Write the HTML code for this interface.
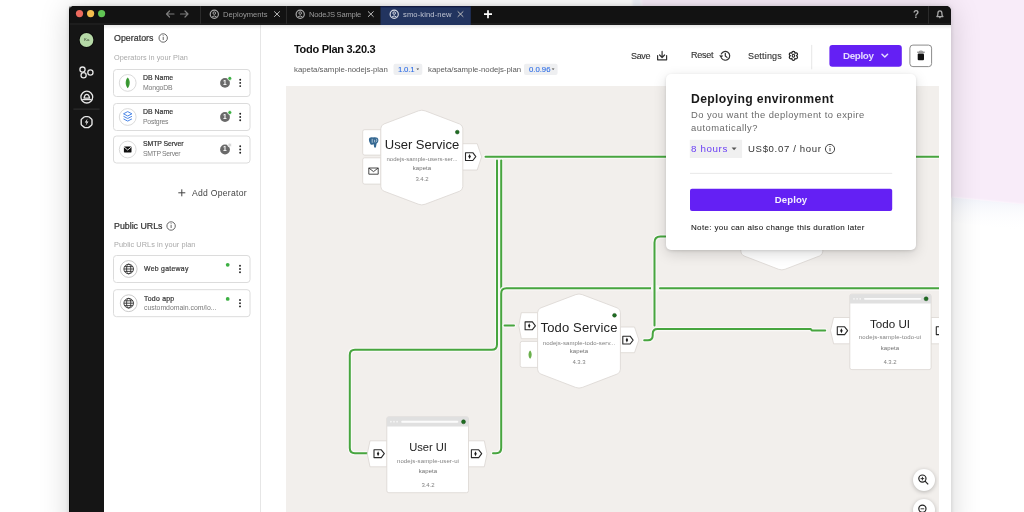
<!DOCTYPE html>
<html><head><meta charset="utf-8">
<style>
*{box-sizing:border-box;margin:0;padding:0}
html,body{width:1024px;height:512px;overflow:hidden;background:#fff;font-family:"Liberation Sans",sans-serif}
svg{position:absolute;left:0;top:0}
#win{position:absolute;left:69px;top:6px;width:882px;height:530px;border-radius:5px 5px 0 0;background:#151515;box-shadow:0 0 4px rgba(0,0,0,.14),0 2px 30px rgba(0,0,0,.17);z-index:1}
#main{z-index:2}
#popup{position:absolute;left:666.2px;top:74.4px;width:249.6px;height:175.5px;background:#fff;border-radius:5px;box-shadow:0 1px 3px rgba(0,0,0,.12),0 4px 14px rgba(0,0,0,.14);z-index:5}
#psvg{z-index:6}
.zb{position:absolute;width:22px;height:22px;border-radius:50%;background:#fff;box-shadow:0 1px 4px rgba(0,0,0,.25);z-index:7}
.t{position:absolute;white-space:nowrap;line-height:1;z-index:10;will-change:transform}
</style></head><body>
<svg width="1024" height="512" style="z-index:0">
 <defs><filter id="bl" x="-20%" y="-20%" width="140%" height="140%"><feGaussianBlur stdDeviation="1.2"/></filter></defs>
 <polygon points="632,-10 641,-10 646,160 640,160" fill="#f1f3fa" filter="url(#bl)"/>
 <polygon points="641,-10 1034,-10 1034,205.5 952,197.5 648,160" fill="#f8ecf9" filter="url(#bl)"/>
 <linearGradient id="band" x1="0" y1="0" x2="0" y2="1"><stop offset="0" stop-color="#f1f3fa"/><stop offset="1" stop-color="#fff" stop-opacity="0"/></linearGradient>
 <polygon points="952,197.5 1034,205.5 1034,232 952,222" fill="url(#band)"/>
</svg>
<div id="win"></div>
<div style="position:absolute;left:68.5px;top:5.5px;width:2px;height:520px;border-radius:5.5px 0 0 0;border-left:1px solid rgba(0,0,0,.6);z-index:9"></div>
<svg id="main" width="1024" height="512">
 <defs>
  <clipPath id="cv"><rect x="286" y="86" width="653" height="426"/></clipPath>
  <g id="tag"><path d="M-5,-3.9 H2.3 L5.3,0 L2.3,3.9 H-5 Z" fill="none" stroke="#2a2a2a" stroke-width="1.1" stroke-linejoin="round"/><path d="M-0.9,-2.5 L0.3,0 L-0.9,2.5 L-2.1,0 Z" fill="#1a1a1a"/></g>
 </defs>
 <!-- title bar -->
 <rect x="69" y="6" width="882" height="18" rx="5" fill="#121212"/>
 <rect x="69" y="23" width="882" height="2" fill="#1d1d1d"/>
 <circle cx="79.5" cy="13.6" r="3.6" fill="#ed6a5e"/>
 <circle cx="90.6" cy="13.6" r="3.6" fill="#f5bf4f"/>
 <circle cx="101.6" cy="13.6" r="3.6" fill="#61c554"/>
 <g stroke="#7c7c7c" stroke-width="1.2" fill="none" stroke-linecap="round" stroke-linejoin="round">
  <path d="M166.5,14 H174 M166.5,14 L169.5,11 M166.5,14 L169.5,17"/>
  <path d="M180.5,14 H188 M188,14 L185,11 M188,14 L185,17"/>
 </g>
 <rect x="200" y="6" width="1" height="18" fill="#2a2a2a"/>
 <rect x="286" y="6" width="1" height="18" fill="#2a2a2a"/>
 <rect x="380.5" y="6.5" width="90.3" height="18.5" fill="#22345f"/><rect x="380.5" y="6.5" width="90.3" height=".8" fill="#0c1445"/>
  <g stroke="#a8a8a8" fill="none"><circle cx="214.3" cy="14.2" r="4.1" stroke-width="1.2"/><circle cx="214.3" cy="13.1" r="1.3" stroke-width="1"/><path d="M211.8,17.1 Q214.3,14.7 216.8,17.1" stroke-width="1"/></g>
  <g stroke="#a8a8a8" fill="none"><circle cx="300.2" cy="14.2" r="4.1" stroke-width="1.2"/><circle cx="300.2" cy="13.1" r="1.3" stroke-width="1"/><path d="M297.7,17.1 Q300.2,14.7 302.7,17.1" stroke-width="1"/></g>
  <g stroke="#d5d9e3" fill="none"><circle cx="394.2" cy="14.2" r="4.1" stroke-width="1.2"/><circle cx="394.2" cy="13.1" r="1.3" stroke-width="1"/><path d="M391.7,17.1 Q394.2,14.7 396.7,17.1" stroke-width="1"/></g>
 <g stroke="#bdbdbd" stroke-width="1" shape-rendering="geometricPrecision">
  <path d="M274.2,11.4 L279.8,16.8"/><path d="M279.8,11.4 L274.2,16.8"/>
  <path d="M368,11.4 L373.6,16.8"/><path d="M373.6,11.4 L368,16.8"/>
  <path d="M457.7,11.4 L463.3,16.8"/><path d="M463.3,11.4 L457.7,16.8"/>
 </g>
 <path d="M484,14.2 H492 M488,10.2 V18.2" stroke="#fff" stroke-width="1.7"/>
 <rect x="928" y="6" width="1" height="18" fill="#2a2a2a"/>
 <path d="M936.9,16.6 C938,15.6 937.9,14.6 937.9,13.4 C937.9,11.8 938.8,10.9 939.9,10.9 C941,10.9 941.9,11.8 941.9,13.4 C941.9,14.6 941.8,15.6 942.9,16.6 Z" fill="none" stroke="#a8a8a8" stroke-width="1.3" stroke-linejoin="round"/>
 <circle cx="939.9" cy="17.6" r=".8" fill="#a8a8a8"/>
 <!-- sidebar -->
 <rect x="69" y="25" width="35" height="487" fill="#151515"/>
 <circle cx="86.5" cy="40" r="7.8" fill="#0a0a0a"/><circle cx="86.5" cy="40" r="6.9" fill="#b6d9a7"/>
 <g fill="none" stroke="#e6e6e6" stroke-width="1.3">
  <circle cx="82.5" cy="69.6" r="2.6"/><circle cx="83.6" cy="75.2" r="2.6"/><circle cx="90.4" cy="72.5" r="2.6"/>
  <circle cx="86.8" cy="97.1" r="5.9"/>
  <path d="M84,98.1 C84.4,95.9 85.5,94.4 86.8,94.4 C88.1,94.4 89.2,95.9 89.6,98.1 Z" stroke-linejoin="round"/>
  <path d="M82.2,99.6 H91.4"/>
  <path d="M85.30,116.60 L87.90,116.60 Q88.60,116.60 89.14,117.04 L91.46,118.96 Q92.00,119.40 92.00,120.10 L92.00,124.10 Q92.00,124.80 91.46,125.24 L89.14,127.16 Q88.60,127.60 87.90,127.60 L85.30,127.60 Q84.60,127.60 84.06,127.16 L81.74,125.24 Q81.20,124.80 81.20,124.10 L81.20,120.10 Q81.20,119.40 81.74,118.96 L84.06,117.04 Q84.60,116.60 85.30,116.60 Z" stroke-width="1.4"/>
 </g>
 <path d="M87.6,118.6 L84.8,122.6 H86.6 L85.6,125.8 L88.5,121.6 H86.6 Z" fill="#f0f0f0"/>
 <rect x="73.4" y="108.6" width="26.2" height="1" fill="#333"/>
 <!-- panel -->
 <rect x="104" y="25" width="156" height="487" fill="#fff"/>
 <rect x="260" y="25" width="1" height="487" fill="#e6e6e6"/>
 <rect x="261" y="25" width="690" height="487" fill="#fff"/>
 <g fill="none" stroke="#555" stroke-width=".9">
  <circle cx="163.2" cy="38" r="4.2"/><circle cx="171.1" cy="226" r="4.2"/>
 </g>
 <g fill="#555"><rect x="162.75" y="37" width=".9" height="3"/><circle cx="163.2" cy="35.7" r=".55"/><rect x="170.65" y="225" width=".9" height="3"/><circle cx="171.1" cy="223.7" r=".55"/></g>
 <g fill="#fff" stroke="#dcdcdc" stroke-width="1">
  <rect x="113.5" y="69.5" width="136.5" height="27" rx="3"/>
  <rect x="113.5" y="103.5" width="136.5" height="27" rx="3"/>
  <rect x="113.5" y="136" width="136.5" height="27" rx="3"/>
  <rect x="113.5" y="255.5" width="136.5" height="27" rx="3"/>
  <rect x="113.5" y="289.7" width="136.5" height="27" rx="3"/>
 </g>
 <g fill="#fff" stroke="#d6d6d6" stroke-width=".9">
  <circle cx="127.7" cy="82.9" r="8.4"/><circle cx="127.7" cy="117" r="8.4"/><circle cx="127.7" cy="149.5" r="8.4"/>
  <circle cx="128.7" cy="269" r="8.4" stroke="#c4c4c4"/><circle cx="128.7" cy="303.2" r="8.4" stroke="#c4c4c4"/>
 </g>
 <path d="M127.7,77.6 C125,80 125,85.6 127.7,88.2 C130.4,85.6 130.4,80 127.7,77.6 Z" fill="#3fa037"/><path d="M127.7,79 V87.6" stroke="#2f7d2a" stroke-width=".5"/>
 <g fill="none" stroke="#4a86e8" stroke-width="1" stroke-linejoin="round">
  <path d="M127.7,111.6 L131.9,113.8 L127.7,116 L123.5,113.8 Z"/>
  <path d="M123.5,116.3 L127.7,118.5 L131.9,116.3"/>
  <path d="M123.5,118.9 L127.7,121.1 L131.9,118.9"/>
 </g>
 <rect x="123.9" y="146.6" width="7.6" height="5.8" rx=".4" fill="#111"/>
 <path d="M124,146.9 L127.7,150 L131.4,146.9" stroke="#fff" stroke-width=".9" fill="none"/>
 <g fill="none" stroke="#333" stroke-width=".9">
  <circle cx="128.7" cy="269" r="4.8"/><ellipse cx="128.7" cy="269" rx="2.1" ry="4.8"/><path d="M123.9,269 H133.5 M124.6,266.6 H132.8 M124.6,271.4 H132.8"/>
  <circle cx="128.7" cy="303.2" r="4.8"/><ellipse cx="128.7" cy="303.2" rx="2.1" ry="4.8"/><path d="M123.9,303.2 H133.5 M124.6,300.8 H132.8 M124.6,305.6 H132.8"/>
 </g>
 <g fill="#6a6a6a"><circle cx="225" cy="82.9" r="4.9"/><circle cx="225" cy="117" r="4.9"/><circle cx="225" cy="149.5" r="4.9"/></g>
 <g stroke="#fff" stroke-width=".8">
  <circle cx="229.8" cy="78.4" r="2" fill="#3cb043"/><circle cx="229.8" cy="112.5" r="2" fill="#3cb043"/><circle cx="229.8" cy="145" r="2" fill="#d8d8d8"/>
 </g>
 <circle cx="227.7" cy="264.8" r="1.9" fill="#3cb043"/><circle cx="227.7" cy="298.9" r="1.9" fill="#3cb043"/>
 <g fill="#222">
  <circle cx="240.2" cy="79.7" r=".95"/><circle cx="240.2" cy="82.9" r=".95"/><circle cx="240.2" cy="86.1" r=".95"/>
  <circle cx="240.2" cy="113.8" r=".95"/><circle cx="240.2" cy="117" r=".95"/><circle cx="240.2" cy="120.2" r=".95"/>
  <circle cx="240.2" cy="146.3" r=".95"/><circle cx="240.2" cy="149.5" r=".95"/><circle cx="240.2" cy="152.7" r=".95"/>
  <circle cx="240" cy="265.8" r=".95"/><circle cx="240" cy="269" r=".95"/><circle cx="240" cy="272.2" r=".95"/>
  <circle cx="240" cy="300" r=".95"/><circle cx="240" cy="303.2" r=".95"/><circle cx="240" cy="306.4" r=".95"/>
 </g>
 <path d="M178.3,192.8 H185.3 M181.8,189.3 V196.3" stroke="#444" stroke-width="1"/>
 <defs><linearGradient id="tsh" x1="0" y1="0" x2="0" y2="1"><stop offset="0" stop-color="#000" stop-opacity=".09"/><stop offset="1" stop-color="#000" stop-opacity="0"/></linearGradient></defs>
 <rect x="104" y="25" width="847" height="4" fill="url(#tsh)"/>
 <!-- header -->
 <rect x="393.5" y="63.7" width="28.8" height="11.2" rx="2" fill="#eeeff1"/>
 <rect x="524" y="63.7" width="33.6" height="11.2" rx="2" fill="#eeeff1"/>
 <path d="M416.4,68.5 H419.2 L417.8,70.1 Z M551.7,68.5 H554.5 L553.1,70.1 Z" fill="#444"/>
 <g fill="none" stroke="#333" stroke-width="1.2" stroke-linejoin="round" stroke-linecap="round">
  <path d="M657.6,55.5 V59.8 H666.6 V55.5"/><path d="M662.1,51.4 V57.4 M659.6,55 L662.1,57.5 L664.6,55"/>
  <path d="M721.3,54 A4.4,4.4 0 1 1 721.6,58.2"/><path d="M725.3,53.3 V56 L727,57.4"/></g><path d="M719.2,55.2 L723.2,55.4 L721.1,58.2 Z" fill="#333"/><g>
 </g>
 <path d="M791.90,53.20 C791.70,50.67 795.10,50.67 794.90,53.20 C796.99,51.77 798.69,54.71 796.40,55.80 C798.69,56.89 796.99,59.83 794.90,58.40 C795.10,60.93 791.70,60.93 791.90,58.40 C789.81,59.83 788.11,56.89 790.40,55.80 C788.11,54.71 789.81,51.77 791.90,53.20 Z" fill="none" stroke="#222" stroke-width="1.2" stroke-linejoin="round"/>
 <ellipse cx="793.4" cy="55.8" rx="1.2" ry="1.5" fill="none" stroke="#222" stroke-width="1.1"/>
 <rect x="811.2" y="44.9" width="1" height="24.4" fill="#e6e6e6"/>
 <rect x="829.4" y="44.9" width="72.4" height="21.9" rx="3" fill="#6420f4"/>
 <path d="M882,54.3 L884.8,57 L887.6,54.3" stroke="#e6deff" stroke-width="1.5" fill="none" stroke-linecap="round" stroke-linejoin="round"/>
 <rect x="909.9" y="45.1" width="21.7" height="21.5" rx="3" fill="#fff" stroke="#8c8c8c" stroke-width="1"/>
 <path d="M917.2,52.2 H924.7" stroke="#777" stroke-width="1.1"/>
 <path d="M919.6,51.8 V51.1 H922.3 V51.8" stroke="#777" stroke-width=".8" fill="none"/>
 <rect x="917.7" y="53.4" width="6.3" height="6.9" rx="1" fill="#111"/>
 <!-- canvas -->
 <rect x="286" y="86" width="653" height="426" fill="#f2efec"/>
 <g clip-path="url(#cv)">
  <g fill="none" stroke-linecap="round">
   <path d="M485.5,156.7 H939" stroke="#f9f8f6" stroke-width="4.4"/><path d="M485.5,156.7 H939" stroke="#47a53f" stroke-width="2"/>
   <path d="M497,160.5 V344.5 Q497,349.8 491.7,349.8 H355 Q349.8,349.8 349.8,355 V448 Q349.8,453.2 355,453.2 H367.5" stroke="#f9f8f6" stroke-width="4.4"/><path d="M497,160.5 V344.5 Q497,349.8 491.7,349.8 H355 Q349.8,349.8 349.8,355 V448 Q349.8,453.2 355,453.2 H367.5" stroke="#47a53f" stroke-width="2"/>
   <path d="M501.2,160.5 V290" stroke="#f9f8f6" stroke-width="4.4"/><path d="M501.2,160.5 V290" stroke="#47a53f" stroke-width="2"/>
   <path d="M939,288.2 H506.4 Q501.2,288.2 501.2,293.4 V448 Q501.2,453.2 496,453.2 H493" stroke="#f9f8f6" stroke-width="4.4"/><path d="M939,288.2 H506.4 Q501.2,288.2 501.2,293.4 V448 Q501.2,453.2 496,453.2 H493" stroke="#47a53f" stroke-width="2"/>
   <path d="M939,288.2 H660" stroke="#f9f8f6" stroke-width="4.4"/><path d="M939,288.2 H660" stroke="#47a53f" stroke-width="2"/>
   <rect x="651" y="285" width="7" height="6.5" fill="#f8f7f5"/>
   <path d="M665.5,236.5 H660.5 Q654.5,236.5 654.5,242.5 V325.6" stroke="#f9f8f6" stroke-width="4.4"/><path d="M665.5,236.5 H660.5 Q654.5,236.5 654.5,242.5 V325.6" stroke="#47a53f" stroke-width="2"/>
   <path d="M644.2,340.3 H647.9 Q652.7,340.3 652.7,335.5 V333.9 Q652.7,329.1 657.5,329.1 H810.6 L812,330.5 H825.2" stroke="#f9f8f6" stroke-width="4.4"/><path d="M644.2,340.3 H647.9 Q652.7,340.3 652.7,335.5 V333.9 Q652.7,329.1 657.5,329.1 H810.6 L812,330.5 H825.2" stroke="#47a53f" stroke-width="2"/>
   <path d="M504.6,325.6 H514" stroke="#f9f8f6" stroke-width="4.4"/><path d="M504.6,325.6 H514" stroke="#47a53f" stroke-width="2"/>
  </g>
  <!-- User Service node -->
  <g stroke="#dad6d2" stroke-width=".8" fill="#fff" stroke-linejoin="round">
   <path d="M381,129.7 H364.7 Q362.7,129.7 362.7,131.7 V153.1 Q362.7,155.1 364.7,155.1 H381 Z"/>
   <path d="M381,157.8 H364.7 Q362.7,157.8 362.7,159.8 V182.1 Q362.7,184.1 364.7,184.1 H381 Z"/>
   <path d="M462,143.7 H477.2 L481.6,156.9 L477.2,170 H462 Z"/>
   <path d="M425.07,110.84 L459.53,123.96 Q462.80,125.20 462.80,128.70 L462.80,186.50 Q462.80,190.00 459.53,191.24 L425.07,204.26 Q421.80,205.50 418.53,204.26 L384.07,191.24 Q380.80,190.00 380.80,186.50 L380.80,128.70 Q380.80,125.20 384.07,123.96 L418.53,110.84 Q421.80,109.60 425.07,110.84 Z"/>
   <!-- Todo Service -->
   <path d="M538,312.7 H521.3 L518.8,325.7 L521.3,338.7 H538 Z"/>
   <path d="M538,341.4 H522.2 Q520.2,341.4 520.2,343.4 V365.4 Q520.2,367.4 522.2,367.4 H538 Z"/>
   <path d="M620,327 H634.5 L638.9,340 L634.5,352.7 H620 Z"/>
   <path d="M582.27,294.64 L617.13,307.86 Q620.40,309.10 620.40,312.60 L620.40,369.30 Q620.40,372.80 617.13,374.05 L582.27,387.45 Q579.00,388.70 575.73,387.45 L540.87,374.05 Q537.60,372.80 537.60,369.30 L537.60,312.60 Q537.60,309.10 540.87,307.86 L575.73,294.64 Q579.00,293.40 582.27,294.64 Z"/>
   <!-- hidden hexagon under popup -->
   <path d="M785.07,176.54 L819.53,189.56 Q822.80,190.80 822.80,194.30 L822.80,251.20 Q822.80,254.70 819.53,255.96 L785.07,269.24 Q781.80,270.50 778.53,269.24 L744.07,255.96 Q740.80,254.70 740.80,251.20 L740.80,194.30 Q740.80,190.80 744.07,189.56 L778.53,176.54 Q781.80,175.30 785.07,176.54 Z"/>
   <!-- User UI -->
   <path d="M387,440.8 H370 L367.3,453.8 L370,466.8 H387 Z"/>
   <path d="M468,440.8 H484.3 L487,453.8 L484.3,466.8 H468 Z"/>
   <rect x="386.8" y="416.8" width="81.7" height="75.9" rx="2"/>
   <!-- Todo UI -->
   <path d="M850,317.5 H833.6 L830.5,330.6 L833.6,343.8 H850 Z"/>
   <path d="M931,317.5 H948 V343.8 H931 Z"/>
   <rect x="849.8" y="294.2" width="81.3" height="75.4" rx="2"/>
  </g>
  <!-- browser bars -->
  <path d="M386.8,426.6 V418.8 Q386.8,416.8 388.8,416.8 H466.5 Q468.5,416.8 468.5,418.8 V426.6 Z" fill="#e0e0e0"/>
  <path d="M849.8,303.6 V296.2 Q849.8,294.2 851.8,294.2 H929.1 Q931.1,294.2 931.1,296.2 V303.6 Z" fill="#e0e0e0"/>
  <g fill="#f6f6f6"><circle cx="390.9" cy="421.7" r=".85"/><circle cx="394" cy="421.7" r=".85"/><circle cx="397.1" cy="421.7" r=".85"/>
   <circle cx="854" cy="298.8" r=".85"/><circle cx="857.1" cy="298.8" r=".85"/><circle cx="860.2" cy="298.8" r=".85"/></g>
  <rect x="401.2" y="420.8" width="57.1" height="1.9" rx=".95" fill="#fbfbfb"/>
  <rect x="864" y="297.9" width="57.2" height="1.9" rx=".95" fill="#fbfbfb"/>
  <g fill="#1f6e22" stroke="#174f18" stroke-width=".5"><circle cx="463.5" cy="421.8" r="2"/><circle cx="926.1" cy="298.8" r="2"/><circle cx="457.3" cy="132.1" r="1.9"/><circle cx="614.5" cy="315.3" r="1.9"/></g>
  <!-- tab icons -->
  <use href="#tag" x="470.5" y="156.6"/>
  <use href="#tag" x="530.1" y="325.8"/>
  <use href="#tag" x="627.8" y="340.1"/>
  <use href="#tag" x="379" y="453.7"/>
  <use href="#tag" x="476.4" y="453.7"/>
  <use href="#tag" x="842.3" y="330.7"/>
  <use href="#tag" x="941.3" y="330.7"/>
  <!-- postgres elephant -->
  <path d="M368.9,139.6 C368.9,137.6 370.9,136.9 373,137.5 C375.2,136.9 378.4,137.2 378.4,140 C378.4,141.9 377.6,143.1 376.6,143.6 L376,147 C375.7,147.9 374.4,147.9 374.1,147 L373.7,144.3 L372.1,144.7 C371.1,145.1 370.5,144.6 370.1,143.6 C369.3,142.3 368.9,140.9 368.9,139.6 Z" fill="#336791"/>
  <path d="M372.2,138.8 V142.8 M373.9,139.8 C375.1,139.8 375.2,142.2 373.9,142.3 M376.3,138.8 C377.1,140 376.9,141.6 375.8,142.3" stroke="#fff" stroke-width=".6" fill="none"/>
  <path d="M368.8,168 H378.2 V174.2 H368.8 Z M368.8,168 L373.5,171.6 L378.2,168" fill="none" stroke="#333" stroke-width=".9" stroke-linejoin="round"/>
  <path d="M530.1,350.4 C528,352.2 528,356.8 530.1,358.8 C532.2,356.8 532.2,352.2 530.1,350.4 Z" fill="#6ab04c"/>
 </g>
</svg>
<div id="popup"></div>
<svg id="psvg" width="1024" height="512">
 <rect x="689.8" y="139.8" width="52.3" height="18.2" fill="#f0f0f0"/>
 <path d="M731.6,147.6 H736.6 L734.1,150.2 Z" fill="#555"/>
 <g fill="none" stroke="#333" stroke-width=".9"><circle cx="830" cy="149" r="4.6"/></g>
 <rect x="829.55" y="148" width=".9" height="3.3" fill="#333"/><circle cx="830" cy="146.5" r=".6" fill="#333"/>
 <rect x="690" y="172.9" width="202.2" height=".8" fill="#e3e3e3"/>
 <rect x="690" y="188.8" width="202.2" height="22.2" rx="2" fill="#6420f4"/>
</svg>
<div class="zb" style="left:912.9px;top:469.1px"></div>
<div class="zb" style="left:912.9px;top:499.3px"></div>
<svg width="1024" height="512" style="z-index:8">
 <g fill="none" stroke="#222" stroke-width="1.2"><circle cx="922.4" cy="478.6" r="3.6"/><path d="M925,481.2 L928.2,484.4"/><path d="M920.6,478.6 H924.2 M922.4,476.8 V480.4" stroke-width=".9"/>
 <circle cx="922.4" cy="508.8" r="3.6"/><path d="M920.6,508.8 H924.2" stroke-width=".9"/></g>
</svg>
<div class="t" id="t0" style="left:223px;top:10.81px;font-size:7.6px;font-weight:400;color:#9a9a9a;letter-spacing:0.017px;">Deployments</div>
<div class="t" id="t1" style="left:308.7px;top:10.81px;font-size:7.6px;font-weight:400;color:#9a9a9a;letter-spacing:-0.215px;">NodeJS Sample</div>
<div class="t" id="t2" style="left:402.5px;top:10.81px;font-size:7.6px;font-weight:400;color:#bfc4d2;letter-spacing:0.112px;">smo-kind-new</div>
<div class="t" id="t3" style="left:113.8px;top:33.73px;font-size:8.8px;font-weight:400;color:#333;letter-spacing:0.047px;-webkit-text-stroke:.22px #333;">Operators</div>
<div class="t" id="t4" style="left:113.8px;top:53.66px;font-size:7.3px;font-weight:400;color:#a9a9a9;letter-spacing:0.037px;">Operators in your Plan</div>
<div class="t" id="t5" style="left:143.1px;top:74.55px;font-size:6.9px;font-weight:400;color:#333;letter-spacing:0.038px;-webkit-text-stroke:.2px #333;">DB Name</div>
<div class="t" id="t6" style="left:143.1px;top:84.95px;font-size:6.9px;font-weight:400;color:#7a7a7a;letter-spacing:-0.159px;">MongoDB</div>
<div class="t" id="t7" style="left:143.1px;top:108.55px;font-size:6.9px;font-weight:400;color:#333;letter-spacing:0.038px;-webkit-text-stroke:.2px #333;">DB Name</div>
<div class="t" id="t8" style="left:143.1px;top:118.95px;font-size:6.9px;font-weight:400;color:#7a7a7a;letter-spacing:-0.243px;">Postgres</div>
<div class="t" id="t9" style="left:143.1px;top:140.85px;font-size:6.9px;font-weight:400;color:#333;letter-spacing:-0.073px;-webkit-text-stroke:.2px #333;">SMTP Server</div>
<div class="t" id="t10" style="left:143.1px;top:151.25px;font-size:6.9px;font-weight:400;color:#7a7a7a;letter-spacing:-0.373px;">SMTP Server</div>
<div class="t" id="t11" style="left:192px;top:188.63px;font-size:8.6px;font-weight:400;color:#444;letter-spacing:0.273px;">Add Operator</div>
<div class="t" id="t12" style="left:113.5px;top:221.63px;font-size:8.8px;font-weight:400;color:#333;letter-spacing:0.009px;-webkit-text-stroke:.22px #333;">Public URLs</div>
<div class="t" id="t13" style="left:113.5px;top:241.36px;font-size:7.3px;font-weight:400;color:#a9a9a9;letter-spacing:0.065px;">Public URLs in your plan</div>
<div class="t" id="t14" style="left:144px;top:266.05px;font-size:6.9px;font-weight:400;color:#333;letter-spacing:0.277px;-webkit-text-stroke:.2px #333;">Web gateway</div>
<div class="t" id="t15" style="left:144px;top:295.65px;font-size:6.9px;font-weight:400;color:#333;letter-spacing:0.263px;-webkit-text-stroke:.2px #333;">Todo app</div>
<div class="t" id="t16" style="left:144px;top:304.85px;font-size:6.9px;font-weight:400;color:#7a7a7a;letter-spacing:-0.017px;">customdomain.com/lo...</div>
<div class="t" id="t17" style="left:294.1px;top:43.77px;font-size:11px;font-weight:700;color:#111;letter-spacing:-0.293px;">Todo Plan 3.20.3</div>
<div class="t" id="t18" style="left:294.1px;top:65.62px;font-size:7.8px;font-weight:400;color:#5a5a5a;letter-spacing:0.007px;">kapeta/sample-nodejs-plan</div>
<div class="t" id="t19" style="left:427.9px;top:65.62px;font-size:7.8px;font-weight:400;color:#5a5a5a;letter-spacing:-0.022px;">kapeta/sample-nodejs-plan</div>
<div class="t" id="t20" style="left:398.2px;top:65.62px;font-size:7.8px;font-weight:400;color:#2f6ee6;letter-spacing:-0.211px;-webkit-text-stroke:.1px #2f6ee6;">1.0.1</div>
<div class="t" id="t21" style="left:528.5px;top:65.62px;font-size:7.8px;font-weight:400;color:#2f6ee6;letter-spacing:-0.037px;-webkit-text-stroke:.1px #2f6ee6;">0.0.96</div>
<div class="t" id="t22" style="left:630.8px;top:51.53px;font-size:9px;font-weight:400;color:#333;letter-spacing:-0.372px;-webkit-text-stroke:.12px #333;">Save</div>
<div class="t" id="t23" style="left:691px;top:51.43px;font-size:9px;font-weight:400;color:#333;letter-spacing:-0.254px;-webkit-text-stroke:.12px #333;">Reset</div>
<div class="t" id="t24" style="left:747.9px;top:51.53px;font-size:9px;font-weight:400;color:#333;letter-spacing:0.181px;-webkit-text-stroke:.12px #333;">Settings</div>
<div class="t" id="t25" style="left:842.6px;top:51.05px;font-size:9.8px;font-weight:700;color:#e4dbff;letter-spacing:-0.354px;">Deploy</div>
<div class="t" id="t26" style="left:690.5px;top:92.78px;font-size:12.2px;font-weight:700;color:#1a1a1a;letter-spacing:0.353px;">Deploying environment</div>
<div class="t" id="t27" style="left:690.5px;top:110.04px;font-size:9.4px;font-weight:400;color:#6a6a6a;letter-spacing:0.455px;">Do you want the deployment to expire</div>
<div class="t" id="t28" style="left:690.5px;top:123.04px;font-size:9.4px;font-weight:400;color:#6a6a6a;letter-spacing:0.505px;">automatically?</div>
<div class="t" id="t29" style="left:690.5px;top:143.95px;font-size:9.8px;font-weight:400;color:#6a3ff5;letter-spacing:0.619px;">8 hours</div>
<div class="t" id="t30" style="left:747.6px;top:144.04px;font-size:9.6px;font-weight:400;color:#333;letter-spacing:0.650px;">US$0.07 / hour</div>
<div class="t" id="t31" style="left:791px;transform:translateX(-50%);top:195.34px;font-size:9.6px;font-weight:700;color:#f4efff;letter-spacing:0.100px;">Deploy</div>
<div class="t" id="t32" style="left:690.5px;top:224.12px;font-size:8px;font-weight:400;color:#222;letter-spacing:0.345px;-webkit-text-stroke:.1px #222;">Note: you can also change this duration later</div>
<div class="t" id="t33" style="left:422px;transform:translateX(-50%);top:137.89px;font-size:13px;font-weight:400;color:#222;letter-spacing:0.007px;">User Service</div>
<div class="t" id="t34" style="left:422px;transform:translateX(-50%);top:156.39px;font-size:6.0px;font-weight:400;color:#808080;letter-spacing:0.012px;">nodejs-sample-users-ser...</div>
<div class="t" id="t35" style="left:422px;transform:translateX(-50%);top:164.69px;font-size:6.0px;font-weight:400;color:#707070;letter-spacing:0.097px;">kapeta</div>
<div class="t" id="t36" style="left:422px;transform:translateX(-50%);top:175.69px;font-size:6.0px;font-weight:400;color:#808080;letter-spacing:-0.090px;">3.4.2</div>
<div class="t" id="t37" style="left:579px;transform:translateX(-50%);top:321.09px;font-size:13px;font-weight:400;color:#222;letter-spacing:0.159px;">Todo Service</div>
<div class="t" id="t38" style="left:579px;transform:translateX(-50%);top:340.39px;font-size:6.0px;font-weight:400;color:#808080;letter-spacing:0.076px;">nodejs-sample-todo-serv...</div>
<div class="t" id="t39" style="left:579px;transform:translateX(-50%);top:347.99px;font-size:6.0px;font-weight:400;color:#707070;letter-spacing:0.097px;">kapeta</div>
<div class="t" id="t40" style="left:579px;transform:translateX(-50%);top:359.19px;font-size:6.0px;font-weight:400;color:#808080;letter-spacing:-0.090px;">4.3.3</div>
<div class="t" id="t41" style="left:427.6px;transform:translateX(-50%);top:441.87px;font-size:11.2px;font-weight:400;color:#222;letter-spacing:-0.054px;">User UI</div>
<div class="t" id="t42" style="left:427.6px;transform:translateX(-50%);top:457.59px;font-size:6.0px;font-weight:400;color:#808080;letter-spacing:0.132px;">nodejs-sample-user-ui</div>
<div class="t" id="t43" style="left:427.6px;transform:translateX(-50%);top:468.19px;font-size:6.0px;font-weight:400;color:#707070;letter-spacing:0.097px;">kapeta</div>
<div class="t" id="t44" style="left:427.6px;transform:translateX(-50%);top:482.09px;font-size:6.0px;font-weight:400;color:#808080;letter-spacing:-0.090px;">3.4.2</div>
<div class="t" id="t45" style="left:890.4px;transform:translateX(-50%);top:318.27px;font-size:11.6px;font-weight:400;color:#222;letter-spacing:0.039px;">Todo UI</div>
<div class="t" id="t46" style="left:890.4px;transform:translateX(-50%);top:334.19px;font-size:6.0px;font-weight:400;color:#808080;letter-spacing:0.156px;">nodejs-sample-todo-ui</div>
<div class="t" id="t47" style="left:890.4px;transform:translateX(-50%);top:344.79px;font-size:6.0px;font-weight:400;color:#707070;letter-spacing:0.097px;">kapeta</div>
<div class="t" id="t48" style="left:890.4px;transform:translateX(-50%);top:358.79px;font-size:6.0px;font-weight:400;color:#808080;letter-spacing:-0.090px;">4.3.2</div>
<div class="t" style="left:223.2px;top:79.6px;font-size:6.6px;font-weight:700;color:#fff">1</div>
<div class="t" style="left:223.2px;top:113.7px;font-size:6.6px;font-weight:700;color:#fff">1</div>
<div class="t" style="left:223.2px;top:146.2px;font-size:6.6px;font-weight:700;color:#fff">1</div>
<div class="t" style="left:83.9px;top:38.1px;font-size:4.4px;color:#2c3a28">Ka</div>
<div class="t" style="left:913.4px;top:9.9px;font-size:10px;font-weight:700;color:#ababab">?</div>
</body></html>
